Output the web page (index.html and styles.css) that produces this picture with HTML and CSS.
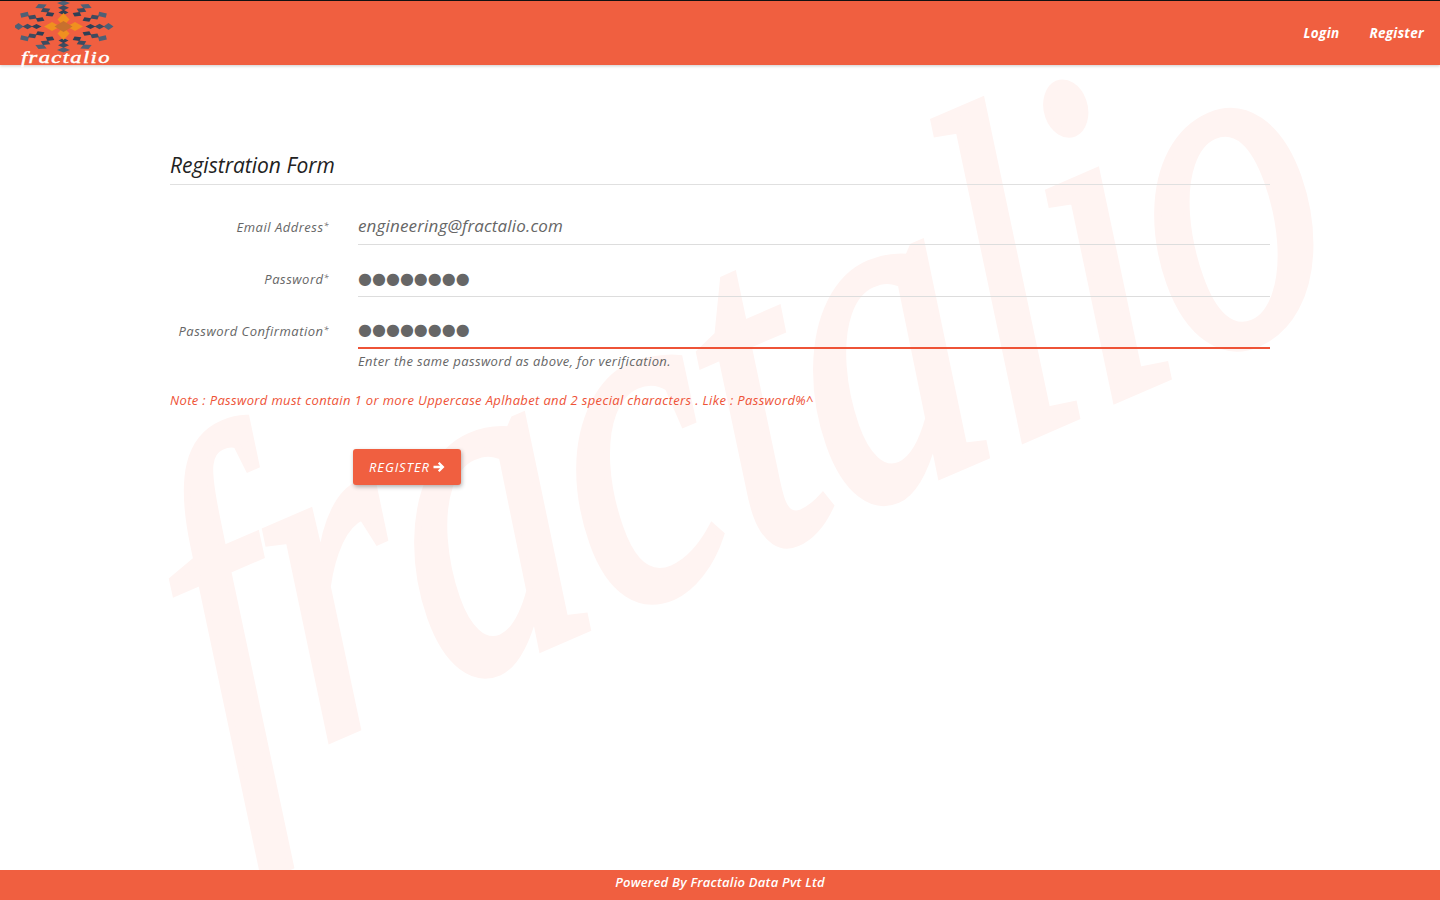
FILE: index.html
```html
<!DOCTYPE html>
<html lang="en">
<head>
<meta charset="utf-8">
<title>Registration Form</title>
<link rel="stylesheet" href="styles.css">
</head>
<body>
<div class="watermark" aria-hidden="true"><span class="watermark-text">fractalio</span></div>
<header class="navbar">
  <a class="brand" href="#">
    <svg class="flake" width="100" height="54" viewBox="0 0 100 54">
      <defs>
        <g id="arm">
          <path d="M0-50l6.500 5-6.500 5-6.500-5z" fill="#4f6075"/>
          <path d="M0-41l5.500 5-5.500 5-5.500-5z" fill="#3d4b5f"/>
          <path d="M0-32l5 5-5 5-5-5z" fill="#2f3f55"/>
        </g>
      </defs>
      <g transform="translate(48.500 25.500) scale(1 .52)">
        <use href="#arm"/>
        <use href="#arm" transform="rotate(30)"/>
        <use href="#arm" transform="rotate(60)"/>
        <use href="#arm" transform="rotate(90)"/>
        <use href="#arm" transform="rotate(120)"/>
        <use href="#arm" transform="rotate(150)"/>
        <use href="#arm" transform="rotate(180)"/>
        <use href="#arm" transform="rotate(210)"/>
        <use href="#arm" transform="rotate(240)"/>
        <use href="#arm" transform="rotate(270)"/>
        <use href="#arm" transform="rotate(300)"/>
        <use href="#arm" transform="rotate(330)"/>
      </g>
      <g fill="#f0901f">
        <path d="M48.500 12l6 6.500-6 6.500-6-6.500z"/><path d="M48.500 26l6 6.500-6 6.500-6-6.500z"/>
        <path d="M29 25.500l8-4.500 8 4.500-8 4.500z"/><path d="M68 25.500l-8-4.500-8 4.500 8 4.500z"/>
      </g>
      <path d="M48.500 20l9 5.500-9 5.500-9-5.500z" fill="#c8702d"/>
    </svg>
    <span class="brand-name">fractalio</span>
  </a>
  <nav class="nav-links">
    <a class="nav-link" href="#">Login</a>
    <a class="nav-link" href="#">Register</a>
  </nav>
</header>
<main class="content">
  <h1 class="title">Registration Form</h1>
  <form class="form">
    <div class="row">
      <label class="label" for="email">Email Address<sup class="req">*</sup></label>
      <div class="field"><input class="input input-email" id="email" type="text" value="engineering@fractalio.com"></div>
    </div>
    <div class="row">
      <label class="label" for="pw">Password<sup class="req">*</sup></label>
      <div class="field"><input class="input input-pw" id="pw" type="text" value="●●●●●●●●"></div>
    </div>
    <div class="row">
      <label class="label" for="pw2">Password Confirmation<sup class="req">*</sup></label>
      <div class="field">
        <input class="input input-pw input-error" id="pw2" type="text" value="●●●●●●●●">
        <p class="help">Enter the same password as above, for verification.</p>
      </div>
    </div>
    <p class="note">Note : Password must contain 1 or more Uppercase Aplhabet and 2 special characters . Like : Password%^</p>
    <div class="actions">
      <button class="btn" type="button">REGISTER
        <svg class="arrow" width="12" height="12" viewBox="0 0 12 12"><path d="M6.500 1L11.500 6l-5 5-1.600-1.600 2.200-2.200H.5V4.800h6.600L4.900 2.600z" fill="#fff"/></svg>
      </button>
    </div>
  </form>
</main>
<footer class="footer">Powered By Fractalio Data Pvt Ltd</footer>
</body>
</html>
```
FILE: styles.css
```css
* { box-sizing: border-box; }
html, body { height: 100%; }
body {
  margin: 0;
  height: 900px;
  overflow: hidden;
  display: flex;
  flex-direction: column;
  background: #fff;
  font-family: "Open Sans", Lato, sans-serif;
  font-style: italic;
  color: #666;
}
.watermark {
  position: absolute;
  left: 0; top: 0;
  width: 1440px; height: 870px;
  overflow: hidden;
}
.watermark-text {
  position: absolute;
  left: 96px;
  top: 412px;
  font: italic 400 470px/1 "Liberation Serif", serif;
  -webkit-text-stroke: 9px #fff4f2;
  color: #fff4f2;
  transform-origin: 0 0;
  transform: rotate(-23.4deg) skewX(-4deg) scaleX(.757);
  white-space: nowrap;
}
.navbar {
  position: relative;
  height: 65px;
  flex: none;
  background: #f05f40;
  border-top: 1px solid #111;
  box-shadow: 0 1px 3px rgba(0,0,0,.2);
  display: flex;
  justify-content: space-between;
  padding: 0 16px 0 15px;
}
.brand { display: block; position: relative; width: 100px; text-decoration: none; }
.flake { display: block; }
.brand-name {
  position: absolute;
  left: 6px; top: 48px;
  font: italic 400 16px/18px "Liberation Serif", serif;
  -webkit-text-stroke: .4px #fff;
  letter-spacing: 1px;
  color: #fff;
  transform-origin: 0 0;
  transform: scaleX(1.4);
}
.nav-links { display: flex; gap: 30px; align-items: center; }
.nav-link { color: #fff; font-weight: 700; font-size: 13.500px; letter-spacing: .3px; text-decoration: none; }
.content {
  position: relative;
  flex: 1;
  width: 1100px;
  margin: 0 auto;
  padding-top: 87px;
}
.title {
  margin: 0 0 21px;
  padding-bottom: 5px;
  border-bottom: 1px solid #e0e0e0;
  font-size: 21px;
  line-height: 27px;
  font-weight: 400;
  color: #222;
}
.form { display: block; }
.row { display: grid; grid-template-columns: 159px 912px; column-gap: 29px; height: 52px; }
.label { font-size: 13px; letter-spacing: .5px; line-height: 16px; text-align: right; padding-top: 13px; color: #666; white-space: nowrap; }
.req { font-size: 9px; line-height: 0; vertical-align: 3px; }
.field { min-width: 0; }
.input {
  display: block;
  width: 100%;
  height: 39px;
  padding: 0;
  border: 0;
  border-bottom: 1px solid #ddd;
  background: transparent;
  font-family: inherit;
  font-style: italic;
  color: #666;
  font-size: 17px;
  letter-spacing: .15px;
  outline: none;
}
.input-pw { font: normal 16px "DejaVu Sans", sans-serif; letter-spacing: 0; padding: 2px 0 0; }
.input-error { border-bottom: 2px solid #ee5337; }
.help { margin: 4px 0 0; font-size: 13px; letter-spacing: .4px; line-height: 16px; color: #666; white-space: nowrap; }
.note { margin: 30px 0 0; font-size: 13px; letter-spacing: .35px; line-height: 16px; color: #ee5337; white-space: nowrap; }
.actions { padding: 41px 0 0 183px; }
.btn {
  display: flex;
  align-items: center;
  gap: 3px;
  width: 108px;
  height: 36px;
  padding: 0 16px;
  border: 0;
  border-radius: 3px;
  background: #f05f40;
  color: #fff;
  font-family: inherit;
  font-style: italic;
  font-size: 13px;
  letter-spacing: .9px;
  white-space: nowrap;
  box-shadow: 1px 2px 4px rgba(0,0,0,.3);
}
.footer {
  position: relative;
  flex: none;
  height: 30px;
  background: #f05f40;
  color: #fff;
  text-align: center;
  font-size: 13px;
  letter-spacing: .25px;
  line-height: 25px;
  font-weight: 600;
}
```
